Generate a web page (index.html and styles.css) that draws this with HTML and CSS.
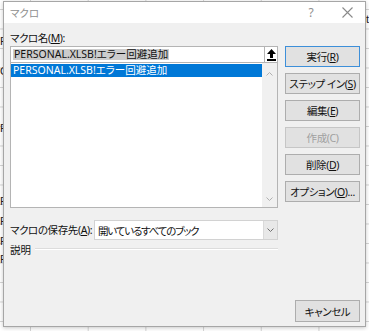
FILE: index.html
```html
<!DOCTYPE html>
<html lang="ja">
  <head>
    <meta charset="UTF-8" />
    <title>マクロ</title>
    <link rel="stylesheet" href="styles.css">
  </head>
  <body>
    <!-- シートの端に見えているセル文字 -->
    <span class="cell-txt" style="top: 35px">R</span>
    <span class="cell-txt" style="top: 65px">G</span>
    <span class="cell-txt" style="top: 122px">F</span>
    <span class="cell-txt" style="top: 195px">F</span>
    <span class="cell-txt" style="top: 215px">F</span>
    <span class="cell-txt" style="top: 235px">F</span>
    <span class="cell-txt" style="top: 253px">F</span>
    <span class="cell-txt right" style="top: 13px">t</span>

    <div class="dialog">
      <div class="titlebar">
        <span class="title">マクロ</span>
        <span class="help">?</span>
        <span class="close">
          <svg width="11" height="11" viewBox="0 0 11 11"><path d="M0.5 0.5 L10.5 10.5 M10.5 0.5 L0.5 10.5" stroke="#8a8a8a" stroke-width="1.1" fill="none"/></svg>
        </span>
      </div>

      <div class="body">
        <div class="main">
          <div class="label">マクロ名(<u>M</u>):</div>
          <div class="name-box">
            <span class="sel">PERSONAL.XLSB!エラー回避追加</span>
            <span class="up-btn">
              <svg width="9" height="12" viewBox="0 0 9 12"><path d="M4.5 0 L9 5 L6 5 L6 9 L3 9 L3 5 L0 5 Z" fill="#000"/><rect x="0" y="10" width="9" height="2" fill="#000"/></svg>
            </span>
          </div>
          <div class="list">
            <div class="items">
              <div class="item selected">PERSONAL.XLSB!エラー回避追加</div>
            </div>
            <div class="vscroll">
              <svg width="7" height="4" viewBox="0 0 7 4"><path d="M0.5 3.5 L3.5 0.5 L6.5 3.5" stroke="#b0b0b0" fill="none"/></svg>
              <svg width="7" height="4" viewBox="0 0 7 4"><path d="M0.5 0.5 L3.5 3.5 L6.5 0.5" stroke="#b0b0b0" fill="none"/></svg>
            </div>
          </div>

          <div class="store-row">
            <span class="label">マクロの保存先(<u>A</u>):</span>
            <div class="combo">
              <span class="combo-val">開いているすべてのブック</span>
              <span class="drop">
                <svg width="7" height="4" viewBox="0 0 7 4"><path d="M0.5 0.5 L3.5 3.5 L6.5 0.5" stroke="#707070" fill="none"/></svg>
              </span>
            </div>
          </div>

          <div class="desc">
            <span>説明</span>
            <span class="rule"></span>
          </div>
        </div>

        <div class="side">
          <button class="btn default">実行(<u>R</u>)</button>
          <button class="btn">ステップ イン(<u>S</u>)</button>
          <button class="btn">編集(<u>E</u>)</button>
          <button class="btn" disabled>作成(C)</button>
          <button class="btn">削除(<u>D</u>)</button>
          <button class="btn">オプション(<u>O</u>)...</button>
          <button class="btn cancel">キャンセル</button>
        </div>
      </div>
    </div>
  </body>
</html>
```

FILE: styles.css
```css
html,
body {
  margin: 0;
  height: 100%;
}
body {
  position: relative;
  overflow: hidden;
  font-family: "Noto Sans", "Noto Sans CJK JP", sans-serif;
  font-size: 10.5px;
  font-feature-settings: "palt";
  color: #111;
  background-color: #fff;
  background-image:
    linear-gradient(to right, #d4d4d4 1px, transparent 1px),
    linear-gradient(to bottom, #d4d4d4 1px, transparent 1px);
  background-size: 57.7px 100%, 100% 19.5px;
  background-position: 30px 0, 0 9px;
}
u {
  text-decoration: underline;
  text-underline-offset: 1px;
}

.cell-txt {
  position: absolute;
  left: 0;
  font-family: "Liberation Sans", sans-serif;
  font-size: 11px;
  color: #222;
}
.cell-txt.right {
  left: 366px;
}

/* ダイアログ本体 */
.dialog {
  position: absolute;
  left: 3px;
  top: 1px;
  width: 363px;
  height: 326px;
  box-sizing: border-box;
  border: 1px solid #a6a6a6;
  background: #f0f0f0;
  box-shadow: 0 1px 4px rgba(0, 0, 0, 0.22);
  display: flex;
  flex-direction: column;
}
.titlebar {
  height: 21px;
  background: #fff;
  display: flex;
  align-items: center;
  padding: 0 0 0 6px;
  color: #8f8f8f;
}
.title {
  flex: 1;
}
.help {
  width: 14px;
  text-align: center;
  font-size: 12px;
  margin-right: 24px;
}
.close {
  width: 11px;
  height: 11px;
  margin-right: 12px;
  display: flex;
}

.body {
  flex: 1;
  display: grid;
  grid-template-columns: 268px 75px;
  column-gap: 7px;
  padding: 8px 4px 4px 6px;
}

/* 左側 */
.main {
  display: flex;
  flex-direction: column;
}
.label {
  line-height: 14px;
  white-space: nowrap;
  letter-spacing: -0.4px;
}
.main > .label {
  margin-bottom: 1px;
}
.name-box {
  height: 17px;
  box-sizing: border-box;
  border: 1px solid #b4b4b4;
  border-right: none;
  background: #fff;
  display: flex;
  align-items: center;
  padding-left: 2px;
}
.sel {
  flex: 0 0 auto;
  background: #cccccc;
  line-height: 11px;
  height: 11px;
  padding: 0 1px;
}
.up-btn {
  margin-left: auto;
  width: 14px;
  height: 17px;
  box-sizing: border-box;
  border: 1px solid #b4b4b4;
  background: #fff;
  display: flex;
  align-items: center;
  justify-content: center;
}
.list {
  height: 145px;
  box-sizing: border-box;
  border: 1px solid #b4b4b4;
  border-top: none;
  background: #fff;
  display: flex;
}
.items {
  flex: 1;
  padding-top: 1px;
}
.item {
  height: 13px;
  line-height: 13px;
  padding-left: 2px;
  white-space: nowrap;
}
.item.selected {
  background: #0078d7;
  color: #fff;
}
.vscroll {
  width: 15px;
  background: #f0f0f0;
  display: flex;
  flex-direction: column;
  justify-content: space-between;
  align-items: center;
  padding: 9px 0 6px;
}

.store-row {
  margin-top: 12px;
  display: flex;
  align-items: center;
}
.store-row .label {
  flex: 0 0 84px;
}
.combo {
  flex: 1;
  height: 20px;
  box-sizing: border-box;
  border: 1px solid #d2d2d2;
  background: #fff;
  display: flex;
  align-items: center;
}
.combo-val {
  flex: 1;
  padding-left: 3px;
  letter-spacing: -1.2px;
}
.drop {
  width: 13px;
  height: 18px;
  background: #e8e8e8;
  border-left: 1px solid #dadada;
  display: flex;
  align-items: center;
  justify-content: center;
}

.desc {
  margin-top: 3px;
  display: flex;
  align-items: center;
  gap: 4px;
  line-height: 14px;
}
.desc .rule {
  flex: 1;
  height: 0;
  border-top: 1px solid #dcdcdc;
  border-bottom: 1px solid #fff;
  margin-top: -2px;
}

/* 右側のボタン */
.side {
  display: flex;
  flex-direction: column;
  gap: 6px;
  padding-top: 15px;
}
.btn {
  height: 21px;
  padding: 0;
  font: inherit;
  font-feature-settings: "palt";
  letter-spacing: -0.4px;
  color: #111;
  background: #e1e1e1;
  border: 1px solid #adadad;
  white-space: nowrap;
}
.btn.default {
  border-color: #3d8fd9;
}
.btn:disabled {
  color: #a0a0a0;
  border-color: #c6c6c6;
}
.btn.cancel {
  margin-top: auto;
  margin-left: 10px;
  height: 22px;
}
```
